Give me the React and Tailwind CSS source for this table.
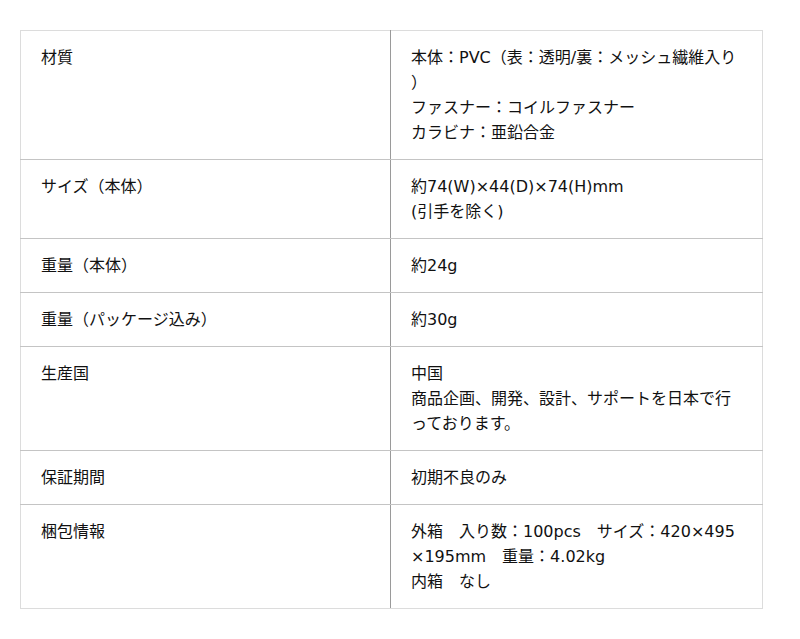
export default function App() {
  const rows = [
    ["材質", ["本体：PVC（表：透明/裏：メッシュ繊維入り）", "ファスナー：コイルファスナー", "カラビナ：亜鉛合金"]],
    ["サイズ（本体）", ["約74(W)×44(D)×74(H)mm", "(引手を除く)"]],
    ["重量（本体）", ["約24g"]],
    ["重量（パッケージ込み）", ["約30g"]],
    ["生産国", ["中国", "商品企画、開発、設計、サポートを日本で行っております。"]],
    ["保証期間", ["初期不良のみ"]],
    ["梱包情報", ["外箱　入り数：100pcs　サイズ：420×495×195mm　重量：4.02kg", "内箱　なし"]],
  ];
  return (
    <div className="w-[800px] h-[639px] bg-white pt-[30px] pl-[20px]" style={{ fontFamily: '"DejaVu Sans", "Noto Sans CJK JP", sans-serif' }}>
      <table className="w-[742px] border-collapse table-fixed text-[16px] leading-[25px] text-[#111]">
        <colgroup>
          <col className="w-[370px]" />
          <col className="w-[372px]" />
        </colgroup>
        <tbody>
          {rows.map(([k, v], idx) => (
            <tr key={k}>
              <td
                className={
                  "border border-l-[#dcdcdc] border-r-[#9a9a9a] align-top pt-[14px] pb-[14px] pl-[20px] pr-[20px] " +
                  (idx === 0 ? "border-t-[#dcdcdc] " : "border-t-[#c4c4c4] ") +
                  (idx === rows.length - 1 ? "border-b-[#dcdcdc]" : "border-b-[#c4c4c4]")
                }
              >
                {k}
              </td>
              <td
                className={
                  "border border-l-[#9a9a9a] border-r-[#dcdcdc] align-top pt-[14px] pb-[14px] pl-[20px] pr-[20px] break-all [line-break:anywhere] " +
                  (idx === 0 ? "border-t-[#dcdcdc] " : "border-t-[#c4c4c4] ") +
                  (idx === rows.length - 1 ? "border-b-[#dcdcdc]" : "border-b-[#c4c4c4]")
                }
              >
                {v.map((l, i) => (
                  <div key={i}>{l}</div>
                ))}
              </td>
            </tr>
          ))}
        </tbody>
      </table>
    </div>
  );
}
